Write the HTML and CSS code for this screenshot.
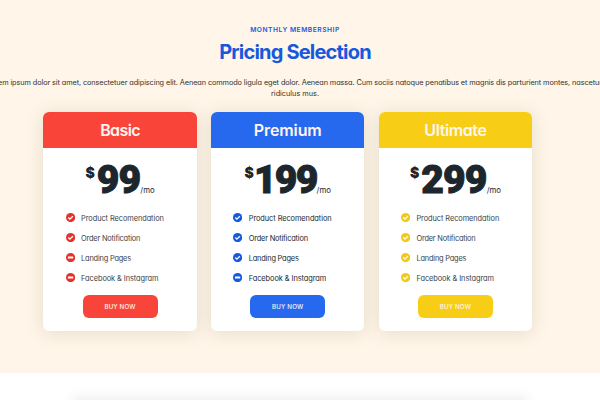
FILE: index.html
```html
<!DOCTYPE html>
<html lang="en">
<head>
  <meta charset="UTF-8">
  <title>Pricing Selection</title>
  <link rel="stylesheet" href="styles.css">
</head>
<body>

  <svg class="sprite" width="0" height="0">
    <symbol id="check" viewBox="0 0 18 18">
      <circle cx="9" cy="9" r="9" fill="currentColor"/>
      <path d="M4.6 9l3 3 5.8-5.8" fill="none" stroke="#fff" stroke-width="2.6"/>
    </symbol>
    <symbol id="minus" viewBox="0 0 18 18">
      <circle cx="9" cy="9" r="9" fill="currentColor"/>
      <rect x="3.8" y="7.1" width="10.4" height="3.8" rx="0.6" fill="#fff"/>
    </symbol>
  </svg>

  <section class="pricing">
    <div class="heading">
      <div class="subtitle">MONTHLY MEMBERSHIP</div>
      <h2>Pricing Selection</h2>
      <p class="intro"><span class="long">Lorem ipsum dolor sit amet, consectetuer adipiscing elit. Aenean commodo ligula eget dolor. Aenean massa. Cum sociis natoque penatibus et magnis dis parturient montes, nascetur</span><span>ridiculus mus.</span></p>
    </div>

    <div class="plans">
      <div class="plan basic">
        <h3>Basic</h3>
        <div class="price"><sup>$</sup><strong>99</strong><small>/mo</small></div>
        <ul>
          <li><svg><use href="#check"/></svg><span>Product Recomendation</span></li>
          <li><svg><use href="#check"/></svg><span class="tight">Order Notification</span></li>
          <li><svg><use href="#minus"/></svg><span class="tight">Landing Pages</span></li>
          <li><svg><use href="#minus"/></svg><span>Facebook &amp; Instagram</span></li>
        </ul>
        <a class="btn">BUY NOW</a>
      </div>

      <div class="plan premium">
        <h3>Premium</h3>
        <div class="price"><sup>$</sup><strong>199</strong><small>/mo</small></div>
        <ul>
          <li><svg><use href="#check"/></svg><span>Product Recomendation</span></li>
          <li><svg><use href="#check"/></svg><span class="tight">Order Notification</span></li>
          <li><svg><use href="#check"/></svg><span class="tight">Landing Pages</span></li>
          <li><svg><use href="#minus"/></svg><span>Facebook &amp; Instagram</span></li>
        </ul>
        <a class="btn">BUY NOW</a>
      </div>

      <div class="plan ultimate">
        <h3>Ultimate</h3>
        <div class="price"><sup>$</sup><strong>299</strong><small>/mo</small></div>
        <ul>
          <li><svg><use href="#check"/></svg><span>Product Recomendation</span></li>
          <li><svg><use href="#check"/></svg><span class="tight">Order Notification</span></li>
          <li><svg><use href="#check"/></svg><span class="tight">Landing Pages</span></li>
          <li><svg><use href="#check"/></svg><span>Facebook &amp; Instagram</span></li>
        </ul>
        <a class="btn">BUY NOW</a>
      </div>
    </div>
  </section>

  <section class="next">
    <div class="next-card"></div>
  </section>

</body>
</html>
```

FILE: styles.css
```css
:root {
  --bg: #fff5e8;
  --text: #1c262c;
  --blue: #1659dd;
}

* {
  box-sizing: border-box;
}

body {
  margin: 0;
  height: 400px;
  overflow: hidden;
  background-color: #fff;
  font-family: Inter, "Open Sans", sans-serif;
  font-feature-settings: "cv11";
  color: var(--text);
}

.sprite {
  display: block;
}

.pricing {
  height: 373px;
  background-color: var(--bg);
  padding-top: 24px;
}

.heading {
  width: 590px;
  height: 88px;
  text-align: center;
}

.subtitle {
  height: 12px;
  font-size: 6.7px;
  line-height: 12px;
  font-weight: 600;
  letter-spacing: 0.52px;
  color: var(--blue);
}

.heading h2 {
  margin: 4px 0 0;
  height: 24px;
  font-size: 20px;
  line-height: 24px;
  font-weight: 700;
  letter-spacing: -0.8px;
  color: var(--blue);
}

.intro {
  display: flex;
  flex-direction: column;
  align-items: center;
  margin: 14px 0 0;
  font-size: 7.3px;
  line-height: 10.5px;
  color: #33332f;
  white-space: nowrap;
}

.intro .long {
  margin-right: 1px;
  letter-spacing: -0.083px;
}

.plans {
  display: flex;
  gap: 14.2px;
  padding-left: 43.3px;
}

.plan {
  width: 153.5px;
  height: 218.5px;
  border-radius: 6px;
  background-color: #fff;
  box-shadow: 0 2px 18px rgba(90, 95, 60, 0.15);
}

.plan h3 {
  margin: 0;
  height: 36px;
  border-radius: 6px 6px 0 0;
  background-color: var(--main);
  color: #fff5ee;
  font-size: 16px;
  line-height: 36px;
  font-weight: 600;
  letter-spacing: -0.6px;
  text-align: center;
}

.plan.premium h3 {
  letter-spacing: -0.1px;
}

.plan.ultimate h3 {
  letter-spacing: -0.4px;
}

.price {
  display: flex;
  justify-content: center;
  height: 60px;
  padding-top: 12px;
}

.price sup {
  margin-right: 2px;
  font-size: 14px;
  line-height: 25px;
  font-weight: 900;
}

.price strong {
  font-family: Roboto, sans-serif;
  font-size: 39px;
  line-height: 40px;
  font-weight: 900;
  letter-spacing: -0.8px;
  -webkit-text-stroke: 1px var(--text);
}

.premium .price sup {
  margin-right: 0;
}

.premium .price strong {
  letter-spacing: -1.7px;
}

.price small {
  padding-top: 24px;
  font-size: 7.8px;
  line-height: 13px;
}

.plan ul {
  list-style: none;
  margin: 0;
  padding: 0 0 0 22.3px;
}

.plan li {
  display: flex;
  align-items: center;
  height: 19.9px;
  font-size: 7.4px;
  letter-spacing: -0.07px;
  color: #3c4347;
  white-space: nowrap;
}

.premium li {
  color: #22282b;
}

.plan li span {
  padding-top: 1px;
}

.plan li .tight {
  letter-spacing: -0.19px;
}

.plan li svg {
  width: 9.2px;
  height: 9.2px;
  margin-right: 6.3px;
  color: var(--icon);
}

.btn {
  display: block;
  width: 75px;
  height: 23px;
  margin: 7px auto 0;
  border-radius: 6px;
  background-color: var(--main);
  color: #fff5ee;
  font-size: 6.2px;
  line-height: 23px;
  font-weight: 500;
  letter-spacing: 0.15px;
  text-align: center;
}

.basic {
  --main: #f94539;
  --icon: #e5322c;
}

.premium {
  --main: #2669ee;
  --icon: #1559dc;
}

.ultimate {
  --main: #f7ce15;
  --icon: #f2c91b;
}

.next {
  height: 27px;
  padding: 26px 75px 0;
  overflow: hidden;
}

.next-card {
  height: 1px;
  background-color: #f4f4f4;
  box-shadow: 0 3px 14px 3px rgba(0, 0, 0, 0.12);
}
```
